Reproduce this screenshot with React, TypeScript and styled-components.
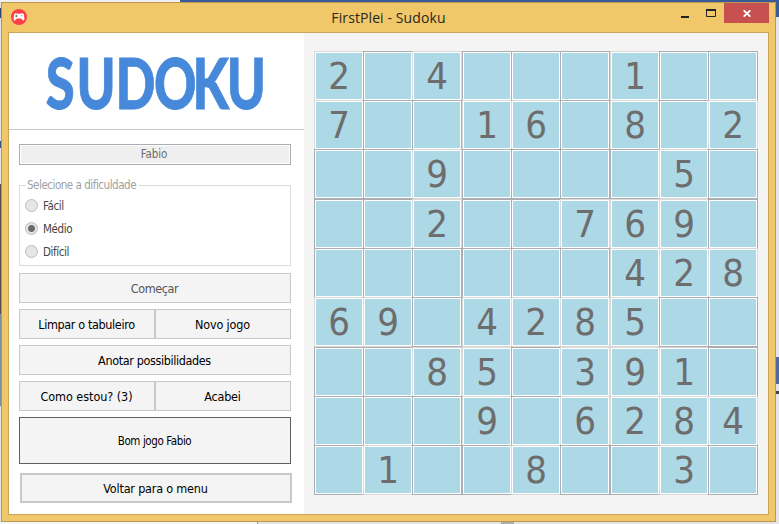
import React from "react";
import styled, { createGlobalStyle, css } from "styled-components";

const ui = `Tahoma, "DejaVu Sans Condensed", "DejaVu Sans", sans-serif`;

const GlobalStyle = createGlobalStyle`
  * { box-sizing: border-box; }
  body { margin: 0; overflow: hidden; }
`;

const Desktop = styled.main`
  width: 779px;
  height: 524px;
  padding: 2px 3px 2px 1px;
  overflow: hidden;
  background:
    linear-gradient(#3d5a98, #3d5a98) 180px 0 / 599px 2px no-repeat,
    linear-gradient(#3d5a98, #3d5a98) 776px 0 / 3px 17px no-repeat,
    linear-gradient(#4f69a8, #4f69a8) 776px 357px / 3px 27px no-repeat,
    linear-gradient(#444, #444) 776px 391px / 3px 3px no-repeat,
    linear-gradient(#2b3f73, #2b3f73) 0 8px / 1px 10px no-repeat,
    linear-gradient(#34508f, #34508f) 0 141px / 1px 7px no-repeat,
    linear-gradient(#544b4b, #544b4b) 0 184px / 1px 130px no-repeat,
    linear-gradient(#7890a5, #7890a5) 0 314px / 1px 92px no-repeat,
    linear-gradient(#adadad, #adadad) 501px 522px / 13px 2px no-repeat,
    linear-gradient(#f6f6f6, #f6f6f6) 0 522px / 257px 2px no-repeat,
    linear-gradient(#9a9a9a, #9a9a9a) 257px 522px / 1px 2px no-repeat,
    linear-gradient(#f2f2f2, #f2f2f2) 0 0 / 180px 2px no-repeat,
    #e4e4e8;
`;

const Window = styled.section`
  display: flex;
  flex-direction: column;
  width: 775px;
  height: 520px;
  padding: 0 6px 6px;
  border: 1px solid #b9974f;
  background: #f0c869;
`;

const TitleBar = styled.header`
  display: grid;
  grid-template-columns: 100px 1fr 100px;
  height: 29px;
  align-items: start;
`;

const AppIcon = styled.svg`
  width: 16px;
  height: 16px;
  margin: 6px 0 0 3px;
`;

const Title = styled.h1`
  margin: 0;
  font: 400 14px/30px "Open Sans", sans-serif;
  letter-spacing: 0.1px;
  color: #2b2620;
  text-align: center;
`;

const WindowControls = styled.div`
  display: flex;
  justify-content: flex-end;
`;

const ControlButton = styled.button<{ $close?: boolean }>`
  display: grid;
  place-items: center;
  width: ${(p) => (p.$close ? 45 : 26)}px;
  height: 20px;
  padding: ${(p) => (p.$close ? "1px 0 0" : "0")};
  border: 0;
  background: ${(p) => (p.$close ? "#c75050" : "transparent")};
`;

const Content = styled.div`
  display: flex;
  height: 483px;
  border: 1px solid #c9a558;
  background: #f4f4f4;
`;

const Sidebar = styled.aside`
  display: flex;
  flex-direction: column;
  width: 295px;
  background: #fff;
`;

const LogoArea = styled.div`
  height: 97px;
  border-bottom: 1px solid #c8c8c8;
`;

const Controls = styled.div`
  display: flex;
  flex-direction: column;
  gap: 6px;
  padding: 14px 13px 0 10px;
`;

const NameField = styled.div`
  height: 21px;
  padding-right: 2px;
  border: 1px solid #abadb3;
  box-shadow: inset 0 0 0 1px #fff;
  background: #efefef;
  font: 11.5px/19px ${ui};
  letter-spacing: -0.1px;
  color: #6d6d6d;
  text-align: center;
`;

const Difficulty = styled.fieldset`
  position: relative;
  display: flex;
  flex-direction: column;
  height: 81px;
  margin: 14px 0 1px;
  padding: 8px 5px 0;
  border: 1px solid #dcdcdc;
`;

const Legend = styled.span`
  position: absolute;
  top: -8px;
  left: 6px;
  padding: 0 3px 0 1px;
  background: #fff;
  font: 11.5px/15px ${ui};
  letter-spacing: -0.47px;
  color: #a0a0a0;
`;

const Option = styled.label`
  display: flex;
  align-items: center;
  gap: 5px;
  height: 23px;
  font: 11.5px/21px ${ui};
  letter-spacing: -0.4px;
  color: #444;
`;

const OptionText = styled.span`
  padding-top: 2px;
`;

const Radio = styled.i<{ $on: boolean }>`
  width: 13px;
  height: 13px;
  border: 1px solid #bcbcbc;
  border-radius: 50%;
  background: ${(p) => (p.$on ? "radial-gradient(circle, #6a6a6a 0 3px, #e6e6e6 4px)" : "#e6e6e6")};
`;

const ButtonRow = styled.div`
  display: grid;
  grid-template-columns: 1fr 1fr;
`;

const Button = styled.button<{ $muted?: boolean; $spacing?: number; $kind?: "message" | "menu" }>`
  height: 30px;
  padding: 1px 1px 0 0;
  border: 1px solid #c8c8c8;
  border-radius: 0;
  background: #f4f4f4;
  font: 12.5px/27px ${ui};
  letter-spacing: ${(p) => p.$spacing ?? -0.37}px;
  color: ${(p) => (p.$muted ? "#555" : "#000")};
  ${(p) => p.$kind === "message" && css`height: 47px; border-color: #606060; font-size: 11.5px; line-height: 45px;`}
  ${(p) => p.$kind === "menu" && css`margin: 3px -1px 0 1px; border-width: 2px; line-height: 25px;`}
`;

const Board = styled.div`
  display: grid;
  grid-template-columns: repeat(3, 148px);
  grid-template-rows: repeat(3, 148px);
  margin: 18px 0 0 10px;
`;

const Box = styled.div`
  display: grid;
  grid-template-columns: repeat(3, 49px);
  grid-template-rows: repeat(3, 49px);
`;

const Cell = styled.div<{ $given: boolean }>`
  width: 50px;
  height: 50px;
  border: 1px solid ${(p) => (p.$given ? "#d9d9d9" : "#abadb3")};
  box-shadow: inset 0 0 0 1px #fff;
  background: #add8e6;
  font: 38px/48px ${ui};
  color: #6d6d6d;
  text-align: center;
`;

const rows = [
  "2.4...1..",
  "7..16.8.2",
  "..9....5.",
  "..2..769.",
  "......428",
  "69.4285..",
  "..85.391.",
  "...9.6284",
  ".1..8..3.",
];

const boxes = Array.from({ length: 9 }, (_, box) =>
  Array.from({ length: 9 }, (_, i) => rows[Math.floor(box / 3) * 3 + Math.floor(i / 3)][(box % 3) * 3 + (i % 3)]),
);

const levels = ["Fácil", "Médio", "Difícil"];

export default function App() {
  return (
    <Desktop>
      <GlobalStyle />
      <Window>
        <TitleBar>
          <AppIcon viewBox="0 0 16 16">
            <circle cx="8" cy="8" r="8" fill="#fb4049" />
            <path d="M4.3 4.2 7 4.7h2l2.7-.5 1.2 1.4.6 5-1.2 1.1-2.2-2.1H5.9l-2.2 2.1-1.2-1.1.6-5z" fill="#fff" />
            <path d="M4.2 7h2.4M5.4 5.8v2.4" stroke="#555" strokeWidth=".8" />
            <circle cx="10.8" cy="6.8" r=".7" fill="#888" />
          </AppIcon>
          <Title>FirstPlei - Sudoku</Title>
          <WindowControls>
            <ControlButton aria-label="Minimizar">
              <svg width="8" height="9"><path d="M0 8h8" stroke="#222" strokeWidth="2" /></svg>
            </ControlButton>
            <ControlButton aria-label="Maximizar">
              <svg width="10" height="8"><path d="M.5 1v6.5h9V1" fill="none" stroke="#222" /><path d="M0 1h10" stroke="#222" strokeWidth="2" /></svg>
            </ControlButton>
            <ControlButton $close aria-label="Fechar">
              <svg width="8" height="7"><path d="m.7.3 6.6 6.4m0-6.4L.7 6.7" stroke="#fff" strokeWidth="1.8" /></svg>
            </ControlButton>
          </WindowControls>
        </TitleBar>
        <Content>
          <Sidebar>
            <LogoArea>
              <svg width="295" height="96" viewBox="9 33 295 96">
                <text
                  transform="translate(0 109) scale(.74 1)"
                  x="62 103.5 156 208 260 306.5"
                  fontFamily="Lato, sans-serif"
                  fontWeight="900"
                  fontSize="71"
                  fill="#4688da"
                  stroke="#4688da"
                  strokeWidth=".8"
                >
                  SUDOKU
                </text>
              </svg>
            </LogoArea>
            <Controls>
              <NameField>Fabio</NameField>
              <Difficulty>
                <Legend>Selecione a dificuldade</Legend>
                {levels.map((level) => (
                  <Option key={level}>
                    <Radio $on={level === "Médio"} />
                    <OptionText>{level}</OptionText>
                  </Option>
                ))}
              </Difficulty>
              <Button $muted>Começar</Button>
              <ButtonRow>
                <Button>Limpar o tabuleiro</Button>
                <Button $spacing={-0.15}>Novo jogo</Button>
              </ButtonRow>
              <Button>Anotar possibilidades</Button>
              <ButtonRow>
                <Button $spacing={-0.05}>Como estou? (3)</Button>
                <Button $spacing={-0.2}>Acabei</Button>
              </ButtonRow>
              <Button $kind="message" $spacing={-0.4}>Bom jogo Fabio</Button>
              <Button $kind="menu" $spacing={-0.2}>Voltar para o menu</Button>
            </Controls>
          </Sidebar>
          <Board>
            {boxes.map((cells, b) => (
              <Box key={b}>
                {cells.map((value, i) => (
                  <Cell key={i} $given={value !== "."}>{value === "." ? "" : value}</Cell>
                ))}
              </Box>
            ))}
          </Board>
        </Content>
      </Window>
    </Desktop>
  );
}
